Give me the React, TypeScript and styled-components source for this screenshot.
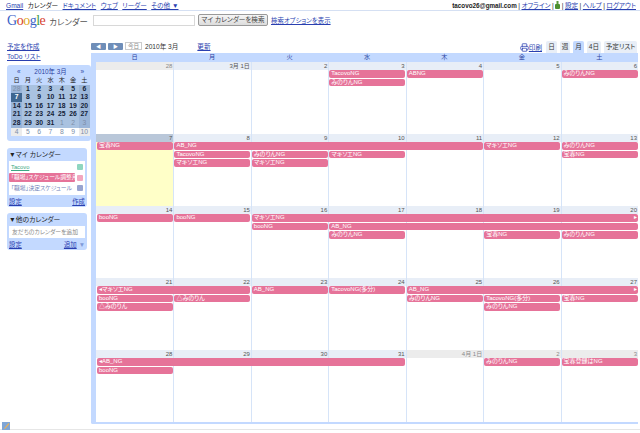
import { Printer } from 'lucide-react';
import styled, { createGlobalStyle } from 'styled-components';

const BLUE = '#c3d9ff';
const LINK = '#2a3fb0';
const EVENT = '#e67399';

const GlobalStyle = createGlobalStyle`
  html, body {
    margin: 0;
    padding: 0;
    height: 433px;
    overflow: hidden;
    background: #fff;
    font-family: "Liberation Sans", "Noto Sans CJK JP", sans-serif;
    font-size: 6.6px;
    font-feature-settings: "palt";
    color: #333;
  }
`;

const Page = styled.div`
  width: 640px;
  height: 433px;
  display: flex;
  flex-direction: column;
`;

const TopBar = styled.div`
  height: 10px;
  flex: none;
  padding: 0 4px 0 6px;
  display: flex;
  align-items: center;
  justify-content: space-between;
  border-bottom: 1px solid #d5e0f3;
`;

const LinkGroup = styled.div<{ $gap?: number }>`
  display: flex;
  align-items: center;
  gap: ${(p) => p.$gap ?? 4.5}px;
  white-space: nowrap;
`;

const A = styled.a`
  color: ${LINK};
  text-decoration: underline;
`;

const Plain = styled.span`
  color: #222;
`;

const Email = styled.span`
  font-weight: bold;
  font-size: 6.3px;
  color: #222;
`;

const Header = styled.div`
  height: 30px;
  flex: none;
  padding: 2px 0 0 7px;
  display: flex;
  align-items: flex-start;
  box-sizing: border-box;
`;

const Logo = styled.div`
  width: 86px;
  flex: none;
  display: flex;
  align-items: baseline;
  gap: 4px;
  line-height: 15px;
  white-space: nowrap;
`;

const LogoWord = styled.span`
  font-family: "Liberation Serif", serif;
  font-size: 14px;
  letter-spacing: -0.5px;
`;

const LogoLetter = styled.span<{ $c: string }>`
  color: ${(p) => p.$c};
`;

const LogoProduct = styled.span`
  font-size: 8.4px;
  color: #555;
`;

const SearchInput = styled.div`
  width: 102px;
  height: 11px;
  margin-top: 2px;
  border: 1px solid #d8d8d8;
  box-sizing: border-box;
`;

const SearchButton = styled.div`
  width: 70px;
  height: 12px;
  margin: 1px 3px 0;
  border: 1px solid #999;
  border-radius: 2px;
  background: linear-gradient(#f5f5f5, #dcdcdc);
  box-sizing: border-box;
  text-align: center;
  line-height: 10px;
  color: #444;
  font-size: 6.6px;
  white-space: nowrap;
`;

const SearchLink = styled(A)`
  margin-top: 3px;
  font-size: 6.4px;
`;

const Main = styled.div`
  height: 381px;
  flex: none;
  display: flex;
`;

const Sidebar = styled.div`
  width: 91px;
  flex: none;
  padding: 1px 0 0 7px;
  box-sizing: border-box;
`;

const SideLink = styled.div`
  height: 10px;
  line-height: 10px;
  font-size: 6.6px;
`;

const MiniCal = styled.div`
  width: 84px;
  height: 76px;
  margin-top: 3px;
  padding: 2px 1px 0 4px;
  box-sizing: border-box;
  background: ${BLUE};
  border-radius: 3px;
`;

const MiniTitle = styled.div`
  display: flex;
  justify-content: space-between;
  padding: 0 6px;
  height: 9px;
  line-height: 9px;
  font-size: 6.4px;
  color: #2a3fa0;
`;

const MiniGrid = styled.div`
  display: grid;
  grid-template-columns: repeat(7, 1fr);
  grid-auto-rows: 8.6px;
`;

const MiniDow = styled.div`
  text-align: center;
  line-height: 8.6px;
  font-size: 6.2px;
  color: #222;
`;

type MiniKind = 'range' | 'weekend' | 'today' | 'next' | 'nextEnd';

const MINI_BG: Record<MiniKind, string> = {
  range: '#a9c2e0',
  weekend: '#9bb5d8',
  today: '#3f6690',
  next: '#ffffff',
  nextEnd: '#ececec',
};

const MiniDay = styled.div<{ $kind: MiniKind; $muted: boolean }>`
  text-align: center;
  line-height: 8.6px;
  font-size: 6.8px;
  font-weight: ${(p) => (p.$kind === 'next' || p.$kind === 'nextEnd' || p.$muted ? 'normal' : 'bold')};
  background: ${(p) => MINI_BG[p.$kind]};
  color: ${(p) => (p.$kind === 'today' ? '#fff' : p.$muted ? '#7d8ea8' : '#152238')};
`;

const Panel = styled.div<{ $top: number }>`
  width: 80px;
  margin-top: ${(p) => p.$top}px;
  background: ${BLUE};
  border-radius: 3px;
  padding: 2px 2px 0;
  box-sizing: border-box;
`;

const PanelTitle = styled.div`
  height: 10px;
  line-height: 10px;
  font-size: 6.8px;
  color: #222;
  white-space: nowrap;
`;

const PanelBody = styled.div`
  background: #fff;
  margin-top: 1px;
  padding: 1px 0;
  height: 34px;
  box-sizing: border-box;
`;

const CalRow = styled.div`
  height: 10.6px;
  display: flex;
  align-items: center;
  justify-content: space-between;
  padding-right: 2px;
`;

const CalName = styled.span<{ $color: string; $filled?: boolean; $line?: boolean }>`
  width: 66px;
  height: 9px;
  line-height: 9px;
  padding-left: 2px;
  box-sizing: border-box;
  font-size: 5.8px;
  white-space: nowrap;
  border-radius: 1px;
  color: ${(p) => (p.$filled ? '#fff' : p.$color)};
  background: ${(p) => (p.$filled ? p.$color : 'transparent')};
  text-decoration: ${(p) => (p.$line ? 'underline' : 'none')};
`;

const Swatch = styled.span<{ $color: string }>`
  width: 6px;
  height: 6px;
  border-radius: 1px;
  background: ${(p) => p.$color};
`;

const PanelFooter = styled.div`
  height: 12px;
  display: flex;
  align-items: center;
  justify-content: space-between;
  font-size: 6.4px;
`;

const AddInput = styled.div`
  height: 12px;
  margin-top: 1px;
  padding-left: 3px;
  background: #fff;
  line-height: 12px;
  font-size: 5.8px;
  color: #888;
  white-space: nowrap;
`;

const AddArrow = styled.span`
  color: #7f9ad8;
  margin-left: 2px;
`;

const Calendar = styled.div`
  flex: 1;
  min-width: 0;
  margin-right: 2px;
  display: flex;
  flex-direction: column;
`;

const Nav = styled.div`
  height: 12px;
  flex: none;
  display: flex;
  align-items: flex-start;
`;

const NavButton = styled.div`
  width: 15px;
  height: 7px;
  margin: 2px 2px 0 0;
  border-radius: 1px;
  background: #6f8eb8;
  color: #fff;
  font-size: 5px;
  line-height: 7px;
  text-align: center;
`;

const TodayButton = styled.div`
  width: 17px;
  height: 8px;
  margin-top: 1px;
  border: 1px solid #ccc;
  box-sizing: border-box;
  color: #888;
  font-size: 5.6px;
  line-height: 6px;
  text-align: center;
`;

const NavDate = styled.span`
  margin: 1px 19px 0 3px;
  line-height: 9px;
  font-size: 6.6px;
  color: #333;
  white-space: nowrap;
`;

const NavLink = styled(A)`
  margin-top: 1px;
  line-height: 9px;
  font-size: 6.6px;
`;

const Tabs = styled.div`
  margin-left: auto;
  padding-right: 1px;
  display: flex;
  align-items: flex-end;
  height: 12px;
  gap: 3px;
`;

const PrintLink = styled(A)`
  display: flex;
  align-items: center;
  height: 12px;
  font-size: 6.6px;
  margin-right: 1px;
`;

const Tab = styled.div<{ $active?: boolean; $w: number }>`
  width: ${(p) => p.$w}px;
  height: 12px;
  line-height: 12px;
  text-align: center;
  font-size: 6.6px;
  border-radius: 2px 2px 0 0;
  color: #333;
  white-space: nowrap;
  background: ${(p) => (p.$active ? BLUE : '#e8eef7')};
`;

const Board = styled.div`
  flex: 1;
  display: flex;
  flex-direction: column;
  border-left: 5px solid ${BLUE};
  border-bottom: 2px solid ${BLUE};
  border-radius: 0 0 0 2px;
`;

const DowBand = styled.div`
  height: 8.5px;
  flex: none;
  display: grid;
  grid-template-columns: repeat(7, 1fr);
  background: ${BLUE};
`;

const DowCell = styled.div`
  text-align: center;
  line-height: 8.5px;
  font-size: 6.2px;
  color: #2a3fa0;
`;

const Week = styled.div`
  height: 72px;
  flex: none;
  display: grid;
  grid-template-columns: repeat(7, 1fr);
  grid-template-rows: 8.5px repeat(7, 8.5px) 1fr;
  min-width: 0;
`;

const DayBody = styled.div<{ $col: number; $today: boolean }>`
  grid-column: ${(p) => p.$col};
  grid-row: 1 / -1;
  border-left: 1px solid ${(p) => (p.$col === 1 ? 'transparent' : '#d6e4f8')};
  background: ${(p) => (p.$today ? '#ffffc8' : '#fff')};
  min-width: 0;
`;

const DayHead = styled.div<{ $col: number; $tone: 'month' | 'other' | 'today' }>`
  grid-column: ${(p) => p.$col};
  grid-row: 1;
  height: 8px;
  padding-right: 1px;
  text-align: right;
  line-height: 8px;
  font-size: 6px;
  background: ${(p) => (p.$tone === 'today' ? '#b9c7d9' : p.$tone === 'other' ? '#ececec' : '#e8eef7')};
  color: ${(p) => (p.$tone === 'other' ? '#8a8a8a' : '#555')};
  border-left: 1px solid ${(p) => (p.$col === 1 ? 'transparent' : '#d6e4f8')};
`;

const EventBar = styled.div<{ $col: number; $span: number; $lane: number }>`
  grid-column: ${(p) => p.$col} / span ${(p) => p.$span};
  grid-row: ${(p) => p.$lane + 2};
  height: 7.5px;
  margin: 0 0.5px 0 1px;
  padding: 0 1px 0 2px;
  display: flex;
  justify-content: space-between;
  box-sizing: border-box;
  background: ${EVENT};
  border-radius: 2px;
  color: #fff;
  font-size: 6px;
  line-height: 7.5px;
  white-space: nowrap;
  min-width: 0;
`;

const Footer = styled.div`
  height: 7px;
  flex: none;
  display: flex;
  align-items: flex-start;
  padding-left: 2px;
  border-bottom: 1px solid #e6e6e6;
`;

type CalEvent = { label: string; col: number; span?: number; lane: number; more?: boolean };
type WeekData = {
  days: string[];
  today?: number;
  events: CalEvent[];
};

const WEEKS: WeekData[] = [
  {
    days: ['28', '3月 1日', '2', '3', '4', '5', '6'],
    events: [
      { label: 'TacovoNG', col: 4, lane: 0 },
      { label: 'みのりんNG', col: 4, lane: 1 },
      { label: 'ABNG', col: 5, lane: 0 },
      { label: 'みのりんNG', col: 7, lane: 0 },
    ],
  },
  {
    days: ['7', '8', '9', '10', '11', '12', '13'],
    today: 1,
    events: [
      { label: '宝春NG', col: 1, lane: 0 },
      { label: 'AB_NG', col: 2, span: 4, lane: 0 },
      { label: 'マキソエNG', col: 6, lane: 0 },
      { label: 'みのりんNG', col: 7, lane: 0 },
      { label: 'TacovoNG', col: 2, lane: 1 },
      { label: 'みのりんNG', col: 3, lane: 1 },
      { label: 'マキソエNG', col: 4, lane: 1 },
      { label: '宝春NG', col: 7, lane: 1 },
      { label: 'マキソエNG', col: 2, lane: 2 },
      { label: 'マキソエNG', col: 3, lane: 2 },
    ],
  },
  {
    days: ['14', '15', '16', '17', '18', '19', '20'],
    events: [
      { label: 'booNG', col: 1, lane: 0 },
      { label: 'booNG', col: 2, lane: 0 },
      { label: 'マキソエNG', col: 3, span: 5, lane: 0, more: true },
      { label: 'booNG', col: 3, lane: 1 },
      { label: 'AB_NG', col: 4, span: 4, lane: 1 },
      { label: 'みのりんNG', col: 4, lane: 2 },
      { label: '宝春NG', col: 6, lane: 2 },
      { label: 'みのりんNG', col: 7, lane: 2 },
    ],
  },
  {
    days: ['21', '22', '23', '24', '25', '26', '27'],
    events: [
      { label: '◂マキソエNG', col: 1, span: 2, lane: 0 },
      { label: 'AB_NG', col: 3, lane: 0 },
      { label: 'TacovoNG(多分)', col: 4, lane: 0 },
      { label: 'AB_NG', col: 5, span: 3, lane: 0, more: true },
      { label: 'booNG', col: 1, lane: 1 },
      { label: '△みのりん', col: 2, lane: 1 },
      { label: 'みのりんNG', col: 5, lane: 1 },
      { label: 'TacovoNG(多分)', col: 6, lane: 1 },
      { label: '宝春NG', col: 7, lane: 1 },
      { label: '△みのりん', col: 1, lane: 2 },
      { label: 'みのりんNG', col: 6, lane: 2 },
    ],
  },
  {
    days: ['28', '29', '30', '31', '4月 1日', '2', '3'],
    events: [
      { label: '◂AB_NG', col: 1, span: 4, lane: 0 },
      { label: 'みのりんNG', col: 6, lane: 0 },
      { label: '宝春登録はNG', col: 7, lane: 0 },
      { label: 'booNG', col: 1, lane: 1 },
    ],
  },
];

const DOW = ['日', '月', '火', '水', '木', '金', '土'];

const MINI_WEEKS = [
  [28, 1, 2, 3, 4, 5, 6],
  [7, 8, 9, 10, 11, 12, 13],
  [14, 15, 16, 17, 18, 19, 20],
  [21, 22, 23, 24, 25, 26, 27],
  [28, 29, 30, 31, 1, 2, 3],
  [4, 5, 6, 7, 8, 9, 10],
];

function miniKind(row: number, col: number): MiniKind {
  if (row === 5) return col === 0 || col === 6 ? 'nextEnd' : 'next';
  if (row === 1 && col === 0) return 'today';
  return col === 0 || col === 6 ? 'weekend' : 'range';
}

function OnlineIcon() {
  return (
    <svg width="5" height="8" viewBox="0 0 5 8">
      <rect x="1.5" y="0" width="2" height="3" fill="#5a9a3a" />
      <rect x="0" y="3" width="5" height="5" rx="1" fill="#4d8f2f" />
    </svg>
  );
}

function PencilIcon() {
  return (
    <svg width="8" height="8" viewBox="0 0 8 8">
      <rect width="8" height="8" fill="#7fa6d6" />
      <path d="M2 6.5 L6.5 1 L7.5 2 L3 7 Z" fill="#e8b05a" />
    </svg>
  );
}

export default function App() {
  return (
    <Page>
      <GlobalStyle />
      <TopBar>
        <LinkGroup>
          <A>Gmail</A>
          <Plain>カレンダー</Plain>
          <A>ドキュメント</A>
          <A>ウェブ</A>
          <A>リーダー</A>
          <A>その他 ▼</A>
        </LinkGroup>
        <LinkGroup $gap={1.5}>
          <Email>tacovo26@gmail.com</Email>
          <Plain>|</Plain>
          <A>オフライン</A>
          <Plain>|</Plain>
          <OnlineIcon />
          <Plain>|</Plain>
          <A>設定</A>
          <Plain>|</Plain>
          <A>ヘルプ</A>
          <Plain>|</Plain>
          <A>ログアウト</A>
        </LinkGroup>
      </TopBar>

      <Header>
        <Logo>
          <LogoWord>
            <LogoLetter $c="#3a62c8">G</LogoLetter>
            <LogoLetter $c="#d8402f">o</LogoLetter>
            <LogoLetter $c="#e0a91c">o</LogoLetter>
            <LogoLetter $c="#3a62c8">g</LogoLetter>
            <LogoLetter $c="#3f9c3f">l</LogoLetter>
            <LogoLetter $c="#d8402f">e</LogoLetter>
          </LogoWord>
          <LogoProduct>カレンダー</LogoProduct>
        </Logo>
        <SearchInput />
        <SearchButton>マイ カレンダーを検索</SearchButton>
        <SearchLink>検索オプションを表示</SearchLink>
      </Header>

      <Main>
        <Sidebar>
          <SideLink>
            <A>予定を作成</A>
          </SideLink>
          <SideLink>
            <A>ToDo リスト</A>
          </SideLink>
          <MiniCal>
            <MiniTitle>
              <span>«</span>
              <span>2010年 3月</span>
              <span>»</span>
            </MiniTitle>
            <MiniGrid>
              {DOW.map((d) => (
                <MiniDow key={d}>{d}</MiniDow>
              ))}
              {MINI_WEEKS.map((week, r) =>
                week.map((day, c) => (
                  <MiniDay
                    key={`${r}-${c}`}
                    $kind={miniKind(r, c)}
                    $muted={(r === 0 && c === 0) || (r === 4 && c > 3) || r === 5}
                  >
                    {day}
                  </MiniDay>
                )),
              )}
            </MiniGrid>
          </MiniCal>

          <Panel $top={7}>
            <PanelTitle>▼マイ カレンダー</PanelTitle>
            <PanelBody>
              <CalRow>
                <CalName $color="#3aa883" $line>
                  Tacovo
                </CalName>
                <Swatch $color="#8fd6c0" />
              </CalRow>
              <CalRow>
                <CalName $color={EVENT} $filled>
                  「職場」スケジュール調整用
                </CalName>
                <Swatch $color="#f2a6bf" />
              </CalRow>
              <CalRow>
                <CalName $color="#6f7fb8">「職場」決定スケジュール</CalName>
                <Swatch $color="#98a4d0" />
              </CalRow>
            </PanelBody>
            <PanelFooter>
              <A>設定</A>
              <A>作成</A>
            </PanelFooter>
          </Panel>

          <Panel $top={6}>
            <PanelTitle>▼他のカレンダー</PanelTitle>
            <AddInput>友だちのカレンダーを追加</AddInput>
            <PanelFooter>
              <A>設定</A>
              <span>
                <A>追加</A>
                <AddArrow>▼</AddArrow>
              </span>
            </PanelFooter>
          </Panel>
        </Sidebar>

        <Calendar>
          <Nav>
            <NavButton>◀</NavButton>
            <NavButton>▶</NavButton>
            <TodayButton>今日</TodayButton>
            <NavDate>2010年 3月</NavDate>
            <NavLink>更新</NavLink>
            <Tabs>
              <PrintLink>
                <Printer size={9} strokeWidth={2} />
                印刷
              </PrintLink>
              <Tab $w={11}>日</Tab>
              <Tab $w={10}>週</Tab>
              <Tab $active $w={11}>
                月
              </Tab>
              <Tab $w={14}>4日</Tab>
              <Tab $w={33}>予定リスト</Tab>
            </Tabs>
          </Nav>
          <Board>
            <DowBand>
              {DOW.map((d) => (
                <DowCell key={d}>{d}</DowCell>
              ))}
            </DowBand>
            {WEEKS.map((week, w) => (
              <Week key={w}>
                {week.days.map((_, i) => (
                  <DayBody key={i} $col={i + 1} $today={week.today === i + 1} />
                ))}
                {week.days.map((day, i) => {
                  const col = i + 1;
                  const isOther = (w === 0 && col === 1) || (w === 4 && col >= 5);
                  const tone = week.today === col ? 'today' : isOther ? 'other' : 'month';
                  return (
                    <DayHead key={day} $col={col} $tone={tone}>
                      {day}
                    </DayHead>
                  );
                })}
                {week.events.map((ev, i) => (
                  <EventBar key={i} $col={ev.col} $span={ev.span ?? 1} $lane={ev.lane}>
                    <span>{ev.label}</span>
                    {ev.more && <span>▸</span>}
                  </EventBar>
                ))}
              </Week>
            ))}
          </Board>
        </Calendar>
      </Main>

      <Footer>
        <PencilIcon />
      </Footer>
    </Page>
  );
}
